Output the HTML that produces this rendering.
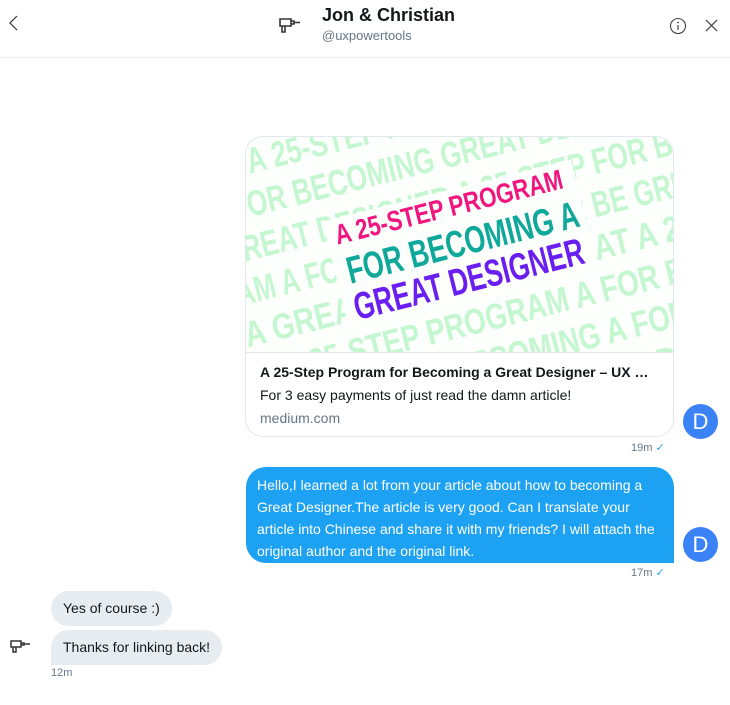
<!DOCTYPE html>
<html><head><meta charset="utf-8"><style>
*{margin:0;padding:0;box-sizing:border-box}
body{width:730px;height:705px;background:#fff;font-family:"Liberation Sans",sans-serif;position:relative;overflow:hidden;color:#14171a}
.abs{position:absolute}
.hdr{left:0;top:0;width:730px;height:58px;border-bottom:1px solid #e6ecf0}
.card{left:245px;top:136px;width:429px;height:301px;border:1px solid #e1e8ed;border-radius:18px;overflow:hidden}
.av{width:35px;height:35px;border-radius:50%;background:#3b82f6;color:#fff;font-size:22px;text-align:center;line-height:35px}
.time{font-size:11px;color:#657786}
.bub{background:#e6ecf0;border-radius:18px;font-size:14px;padding:0 12px;height:35px;line-height:35px;white-space:nowrap}
</style></head><body>
<div class="abs hdr">
<svg class="abs" style="left:6px;top:14px" width="16" height="18" viewBox="0 0 16 18"><path d="M11 2 L4 9 L11 16" fill="none" stroke="#333" stroke-width="1.2"/></svg>
<svg class="abs" style="left:278px;top:15px" width="24" height="20" viewBox="0 0 24 20"><path d="M2 4 h11 v7 h-11 z M4 11 v6 h3 v-6 M13 6 h3 v3 h-3 M16 7.5 h6" fill="none" stroke="#333" stroke-width="1.6"/></svg>
<div class="abs" style="left:322px;top:5px;font-size:18px;font-weight:bold">Jon &amp; Christian</div>
<div class="abs" style="left:322px;top:28px;font-size:13px;color:#657786">@uxpowertools</div>
<svg class="abs" style="left:669px;top:17px" width="18" height="18" viewBox="0 0 18 18"><circle cx="9" cy="9" r="7.5" fill="none" stroke="#444" stroke-width="1.1"/><path d="M9 8 v5" stroke="#444" stroke-width="1.2"/><circle cx="9" cy="5.5" r="0.9" fill="#444"/></svg>
<svg class="abs" style="left:705px;top:19px" width="13" height="13" viewBox="0 0 14 14"><path d="M1 1 L13 13 M13 1 L1 13" stroke="#444" stroke-width="1.3"/></svg>
</div>

<div class="abs card">
<svg width="429" height="215" viewBox="0 0 429 215" style="display:block;background:#fdfffd">
<g transform="rotate(-14 214 107)" font-family="Liberation Sans, sans-serif" font-weight="bold" font-size="36" fill="#c4f7d0">
<text x="-120" y="-12" textLength="700" lengthAdjust="spacingAndGlyphs">PROGRAM A 25-STEP PROGRAM A FOR BECOMING A</text>
<text x="-100" y="30" textLength="650" lengthAdjust="spacingAndGlyphs">MING A FOR BECOMING GREAT DESIGNER GREAT</text>
<text x="-110" y="72" textLength="680" lengthAdjust="spacingAndGlyphs">IGNER GREAT DESIGNER A 25-STEP FOR BECOMING</text>
<text x="-110" y="114" textLength="660" lengthAdjust="spacingAndGlyphs">PROGRAM A FOR BECOMING A FOR BE GREAT DESI</text>
<text x="-100" y="156" textLength="660" lengthAdjust="spacingAndGlyphs">MING A GREAT DESIGNER GREAT A 25-STEP P</text>
<text x="-120" y="198" textLength="680" lengthAdjust="spacingAndGlyphs">ESIGNER A 25-STEP PROGRAM A FOR BECOMING</text>
<text x="-80" y="240" textLength="660" lengthAdjust="spacingAndGlyphs">GREAT DESIGNER BECOMING A FOR BECOMING</text>
<text x="-80" y="282" textLength="620" lengthAdjust="spacingAndGlyphs">A 25-STEP PROGRAM GREAT DESIGNER</text>
</g>
<g transform="rotate(-14 214 107)" font-family="Liberation Sans, sans-serif" font-weight="bold" text-anchor="middle">
<rect x="86" y="52" width="256" height="112" fill="#fdfffd"/>
<text x="212" y="78" font-size="28" fill="#f0157f" textLength="234" lengthAdjust="spacingAndGlyphs">A 25-STEP PROGRAM</text>
<text x="217" y="119" font-size="38" fill="#10a89a" textLength="238" lengthAdjust="spacingAndGlyphs">FOR BECOMING A</text>
<text x="214" y="156" font-size="38" fill="#6a1ff0" textLength="236" lengthAdjust="spacingAndGlyphs">GREAT DESIGNER</text>
</g>
</svg>
<div style="border-top:1px solid #e1e8ed;padding:9px 14px 0">
<div style="font-size:14px;font-weight:bold;line-height:20px;white-space:nowrap">A 25-Step Program for Becoming a Great Designer – UX …</div>
<div style="font-size:14px;line-height:26px">For 3 easy payments of just read the damn article!</div>
<div style="font-size:14px;line-height:20px;color:#657786">medium.com</div>
</div>
</div>
<div class="abs av" style="left:683px;top:404px">D</div>
<div class="abs time" style="left:631px;top:441px">19m <span style="color:#1da1f2">✓</span></div>

<div class="abs" style="left:246px;top:467px;width:428px;height:96px;background:#1da1f2;border-radius:20px 20px 0 20px;color:#fff;font-size:14px;line-height:22px;padding:7px 11px">Hello,I learned a lot from your article about how to becoming a Great Designer.The article is very good. Can I translate your article into Chinese and share it with my friends? I will attach the original author and the original link.</div>
<div class="abs av" style="left:683px;top:527px">D</div>
<div class="abs time" style="left:631px;top:566px">17m <span style="color:#1da1f2">✓</span></div>

<div class="abs bub" style="left:51px;top:591px">Yes of course :)</div>
<div class="abs bub" style="left:51px;top:630px;border-radius:18px 18px 18px 0">Thanks for linking back!</div>
<svg class="abs" style="left:9px;top:638px" width="24" height="18" viewBox="0 0 24 18"><path d="M2 3 h10 v6 h-10 z M4 9 v5 h3 v-5 M12 5 h3 v2 h-3 M15 6 h6" fill="none" stroke="#333" stroke-width="1.5"/></svg>
<div class="abs time" style="left:51px;top:667px">12m</div>
</body></html>
